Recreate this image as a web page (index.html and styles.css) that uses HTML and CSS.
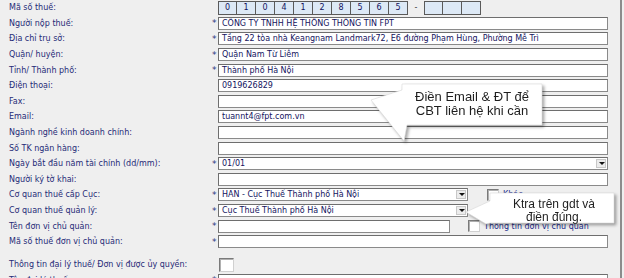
FILE: index.html
```html
<!DOCTYPE html>
<html lang="vi">
<head>
    <meta charset="UTF-8">
    <title>Thông tin người nộp thuế</title>
    <link rel="stylesheet" href="styles.css">
</head>
<body>
    <div class="form">
        <div class="row">
            <span class="label">Mã số thuế:</span>
            <span class="star"></span>
            <div class="mst">
                <span class="digit">0</span><span class="digit">1</span><span class="digit">0</span><span class="digit">4</span><span class="digit">1</span><span class="digit">2</span><span class="digit">8</span><span class="digit">5</span><span class="digit">6</span><span class="digit">5</span>
                <span class="dash">-</span>
                <span class="digit"></span><span class="digit"></span><span class="digit"></span>
            </div>
        </div>
        <div class="row">
            <span class="label">Người nộp thuế:</span>
            <span class="star">*</span>
            <div class="field">CÔNG TY TNHH HỆ THỐNG THÔNG TIN FPT</div>
        </div>
        <div class="row">
            <span class="label">Địa chỉ trụ sở:</span>
            <span class="star">*</span>
            <div class="field">Tầng 22 tòa nhà Keangnam Landmark72, E6 đường Phạm Hùng, Phường Mễ Trì</div>
        </div>
        <div class="row">
            <span class="label">Quận/ huyện:</span>
            <span class="star">*</span>
            <div class="field">Quận Nam Từ Liêm</div>
        </div>
        <div class="row">
            <span class="label">Tỉnh/ Thành phố:</span>
            <span class="star">*</span>
            <div class="field">Thành phố Hà Nội</div>
        </div>
        <div class="row">
            <span class="label">Điện thoại:</span>
            <span class="star"></span>
            <div class="field">0919626829</div>
        </div>
        <div class="row">
            <span class="label">Fax:</span>
            <span class="star"></span>
            <div class="field"></div>
        </div>
        <div class="row">
            <span class="label">Email:</span>
            <span class="star"></span>
            <div class="field">tuannt4@fpt.com.vn</div>
        </div>
        <div class="row">
            <span class="label">Ngành nghề kinh doanh chính:</span>
            <span class="star"></span>
            <div class="field"></div>
        </div>
        <div class="row">
            <span class="label">Số TK ngân hàng:</span>
            <span class="star"></span>
            <div class="field"></div>
        </div>
        <div class="row">
            <span class="label">Ngày bắt đầu năm tài chính (dd/mm):</span>
            <span class="star">*</span>
            <div class="field select"><span class="value">01/01</span><span class="arrow"></span></div>
        </div>
        <div class="row">
            <span class="label">Người ký tờ khai:</span>
            <span class="star"></span>
            <div class="field"></div>
        </div>
        <div class="row">
            <span class="label">Cơ quan thuế cấp Cục:</span>
            <span class="star">*</span>
            <div class="field select short"><span class="value">HAN - Cục Thuế Thành phố Hà Nội</span><span class="arrow"></span></div>
            <span class="check check-other"></span>
            <span class="check-text">Khác</span>
        </div>
        <div class="row">
            <span class="label">Cơ quan thuế quản lý:</span>
            <span class="star">*</span>
            <div class="field select short"><span class="value">Cục Thuế Thành phố Hà Nội</span><span class="arrow"></span></div>
        </div>
        <div class="row">
            <span class="label">Tên đơn vị chủ quản:</span>
            <span class="star">*</span>
            <div class="field owner"></div>
            <span class="check check-owner"></span>
            <span class="check-text">Thông tin đơn vị chủ quản</span>
        </div>
        <div class="row">
            <span class="label">Mã số thuế đơn vị chủ quản:</span>
            <span class="star">*</span>
            <div class="field"></div>
        </div>
        <div class="row agent">
            <span class="label">Thông tin đại lý thuế/ Đơn vị được ủy quyền:</span>
            <span class="star"></span>
            <span class="check check-big"></span>
        </div>
        <div class="row">
            <span class="label">Tên đại lý thuế:</span>
            <span class="star">*</span>
            <div class="field"></div>
        </div>
    </div>

    <!-- ghi chú -->
    <div class="callout callout-contact">
        <svg width="190" height="70" viewBox="360 78 190 70">
            <polygon points="402,84 542,84 542,125 407,125 404,141 371,100 402,90" fill="#fff" stroke="#d8d8d8" stroke-width="0.6"/>
        </svg>
        <p>Điền Email &amp; ĐT để<br>CBT liên hệ khi cần</p>
    </div>
    <div class="callout callout-check">
        <svg width="160" height="50" viewBox="460 184 160 50">
            <polygon points="490,193 614,193 614,223 490,223 486,224 466,212 490,201" fill="#fff" stroke="#d8d8d8" stroke-width="0.6"/>
        </svg>
        <p>Ktra trên gdt và<br>điền đúng.</p>
    </div>
</body>
</html>
```
FILE: styles.css
```css
body {
    margin: 0;
    width: 624px;
    height: 278px;
    overflow: hidden;
    position: relative;
    background: #efefef;
    font-family: "DejaVu Sans", Verdana, sans-serif;
    font-size: 8px;
    color: #1f2b77;
}
.form {
    width: 620px;
    height: 278px;
    border-right: 2px solid #8c8c8c;
}
.row {
    display: flex;
    align-items: center;
    height: 15.6px;
}
.row.agent {
    margin-top: 7.6px;
}
.label {
    width: 203px;
    padding-left: 9px;
    white-space: nowrap;
}
.star {
    width: 6px;
    font-size: 9px;
    line-height: 8px;
    color: #2a3580;
}
.field {
    width: 390px;
    height: 13px;
    box-sizing: border-box;
    border: 1px solid #6e6e6e;
    border-right-color: #8a8a8a;
    border-bottom-color: #8a8a8a;
    background: #fff;
    padding-left: 3px;
    line-height: 11px;
    color: #13135e;
    white-space: nowrap;
    overflow: hidden;
}
.select {
    display: flex;
    justify-content: space-between;
    align-items: center;
    padding-right: 1px;
}
.select.short {
    width: 250px;
}
.field.owner {
    width: 232px;
}
.arrow {
    width: 10px;
    height: 9px;
    box-sizing: border-box;
    border: 1px solid #c8c8c8;
    background: #ececec;
    position: relative;
}
.arrow::after {
    content: "";
    position: absolute;
    left: 2px;
    top: 2px;
    border-left: 3px solid transparent;
    border-right: 3px solid transparent;
    border-top: 3px solid #111;
}
.mst {
    display: flex;
    align-items: center;
    height: 14px;
}
.digit {
    width: 19px;
    height: 14px;
    box-sizing: border-box;
    border: 1px solid #5a5a5a;
    border-left-width: 0;
    background: #dde9f6;
    text-align: center;
    line-height: 12px;
    color: #13135e;
}
.digit:first-child,
.dash + .digit {
    border-left-width: 1px;
}
.dash {
    width: 16px;
    text-align: center;
    color: #333;
}
.check {
    width: 12px;
    height: 12px;
    box-sizing: border-box;
    background: #fff;
    border: 1px solid #7a7a7a;
    border-right-color: #d0d0d0;
    border-bottom-color: #d0d0d0;
    box-shadow: inset 1px 1px #b0b0b0;
}
.check-other {
    margin-left: 19px;
}
.check-owner {
    margin-left: 18px;
}
.check-big {
    width: 15px;
    height: 14px;
    margin-left: 1px;
}
.check-text {
    margin-left: 4px;
    white-space: nowrap;
    color: #1a2a8a;
}
.callout {
    position: absolute;
    filter: drop-shadow(2px 2px 1.5px rgba(0, 0, 0, 0.35));
}
.callout svg {
    display: block;
}
.callout p {
    position: absolute;
    margin: 0;
    font-family: "Liberation Sans", Arial, sans-serif;
    color: #1e1e1e;
    text-align: center;
    white-space: nowrap;
}
.callout-contact {
    left: 360px;
    top: 78px;
}
.callout-contact p {
    left: 42px;
    top: 12px;
    width: 140px;
    font-size: 13px;
    line-height: 14px;
}
.callout-check {
    left: 460px;
    top: 184px;
}
.callout-check p {
    left: 32px;
    top: 14px;
    width: 124px;
    font-size: 12px;
    line-height: 12.5px;
}
```
